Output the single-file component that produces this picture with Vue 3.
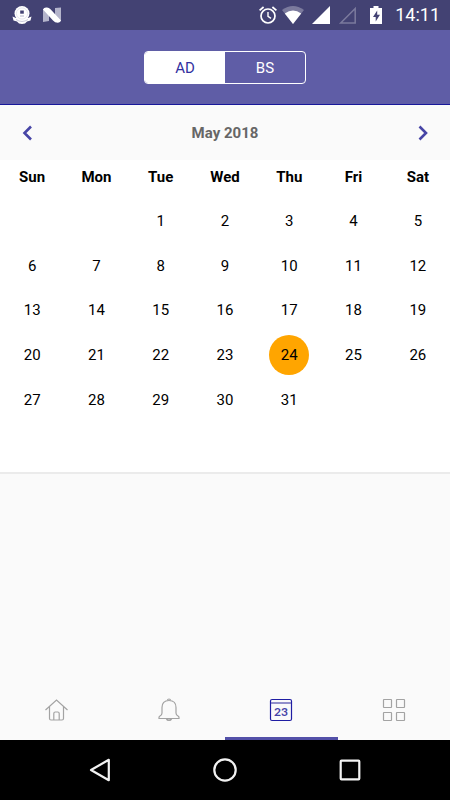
<template>
  <div class="screen">
    <div class="status-bar">
      <div class="status-group">
        <svg class="status-icon" width="20" height="20" viewBox="0 0 20 20">
          <path d="M0.500 11.500 L4 13 L16 13 L19.500 11.500 L18.500 15.500 L15 16.500 L13 18.500 L10 19 L7 18.500 L5 16.500 L1.500 15.500z" fill="#fff" />
          <circle cx="10" cy="8.500" r="7.500" fill="#fff" />
          <circle cx="10" cy="8.500" r="5.600" fill="none" stroke="#dcdce8" stroke-width="0.700" />
          <path d="M8.200 5.500h3.600v3.200H8.200z" fill="#434273" />
          <path d="M8 11h4" fill="none" stroke="#b4b4cb" stroke-width="1" />
          <path d="M4 14.500 Q10 18.500 16 14.500" fill="none" stroke="#b4b4cb" stroke-width="0.700" />
        </svg>
        <svg class="status-icon" width="20" height="20" viewBox="0 0 20 20">
          <path d="M1 4 L7 3 V16 L1 17z M13 3 L19 2.500 V16 L13 17z" fill="#b4b4cb" />
          <path d="M1 4.500 Q2 2 5 2.500 Q7 2.600 8.500 4.300 L19 15.500 Q18.500 17.500 16 17.700 Q13 17.800 11 15.500z" fill="#fff" />
        </svg>
      </div>
      <div class="status-group">
        <svg class="status-icon alarm" width="20" height="20" viewBox="0 0 20 20">
          <circle cx="10" cy="11" r="7" fill="none" stroke="#fff" stroke-width="1.700" />
          <path d="M1.600 5.400 L5.600 2 M18.400 5.400 L14.400 2" stroke="#fff" stroke-width="1.800" />
          <path d="M10 7v4.300l3 2" fill="none" stroke="#fff" stroke-width="1.400" />
        </svg>
        <svg class="status-icon" width="22" height="20" viewBox="0 0 22 20">
          <path d="M0 5 Q11 -3 22 5 L11 19z" fill="#7b7a9d" />
          <path d="M2.800 8.400 Q11 2.400 19.200 8.400 L11 19z" fill="#fff" />
        </svg>
        <svg class="status-icon" width="20" height="20" viewBox="0 0 20 20">
          <path d="M19 1v18H1z" fill="#fff" />
        </svg>
        <svg class="status-icon signal" width="20" height="20" viewBox="0 0 20 20">
          <path d="M17.200 3.500v14.500H2.700z" fill="none" stroke="#7b7a9d" stroke-width="1.500" />
        </svg>
        <svg class="status-icon battery" width="12" height="20" viewBox="0 0 12 20">
          <path d="M3.500 1h5v2H12v16H0V3h3.500z" fill="#fff" />
          <path d="M7.200 5.500 L3 12h2.700v4.500L10 9.800H7.200z" fill="#434273" />
        </svg>
        <span class="clock">14:11</span>
      </div>
    </div>

    <header class="header">
      <div class="segments">
        <button
          v-for="era in eras"
          :key="era"
          type="button"
          class="segment"
          :class="{ active: era === selectedEra }"
          :aria-pressed="era === selectedEra"
          @click="selectedEra = era"
        >
          {{ era }}
        </button>
      </div>
    </header>

    <main class="content">
      <div class="month-bar">
        <button type="button" class="arrow" aria-label="Previous month">
          <svg width="24" height="24" viewBox="0 0 24 24">
            <path d="M16 5.500 L9.500 12 L16 18.500" />
          </svg>
        </button>
        <h1 class="month">May 2018</h1>
        <button type="button" class="arrow" aria-label="Next month">
          <svg width="24" height="24" viewBox="0 0 24 24">
            <path d="M8.500 5.500 L15 12 L8.500 18.500" />
          </svg>
        </button>
      </div>

      <div class="calendar">
        <table class="days">
          <thead>
            <tr>
              <th v-for="name in weekdays" :key="name" scope="col">{{ name }}</th>
            </tr>
          </thead>
          <tbody>
            <tr v-for="(week, index) in weeks" :key="index">
              <td v-for="(day, column) in week" :key="column">
                <button
                  v-if="day"
                  type="button"
                  class="day"
                  :class="{ selected: day === selectedDay }"
                  @click="selectedDay = day"
                >
                  {{ day }}
                </button>
              </td>
            </tr>
          </tbody>
        </table>
      </div>
    </main>

    <nav class="tabs">
      <a href="#home" class="tab" aria-label="Home">
        <svg width="24" height="24" viewBox="0 0 24 24">
          <path d="M1.500 12 L12.500 2 L23.500 12 M5.500 8.500V20.500q0 1.500 1.500 1.500h11q1.500 0 1.500-1.500V8.500 M9.800 22v-6.500q0-1.500 1.500-1.500h2.400q1.500 0 1.500 1.500v6.500" />
        </svg>
      </a>
      <a href="#notices" class="tab" aria-label="Notices">
        <svg width="24" height="24" viewBox="0 0 24 24">
          <path d="M5 15V9.500Q5 2.500 12 2.500T19 9.500V15q0 2 2 3 1 .500 1 1.500v1H2v-1q0-1 1-1.500 2-1 2-3z" />
          <path d="M10.500 2.300q0-1.300 1.500-1.300t1.500 1.300M9.500 21q.500 1.500 2.500 1.500t2.500-1.500z" />
        </svg>
      </a>
      <a href="#calendar" class="tab active" aria-label="Calendar" aria-current="page">
        <svg width="24" height="24" viewBox="0 0 24 24">
          <rect x="1.500" y="1.500" width="21" height="21" rx="1.500" />
          <path class="band" d="M2 5h20" />
          <text x="12" y="18" text-anchor="middle">23</text>
        </svg>
      </a>
      <a href="#more" class="tab" aria-label="More">
        <svg width="24" height="24" viewBox="0 0 24 24">
          <rect x="1.500" y="1.500" width="8" height="8" rx="0.500" />
          <rect x="14.500" y="1.500" width="8" height="8" rx="0.500" />
          <rect x="1.500" y="14.500" width="8" height="8" rx="0.500" />
          <rect x="14.500" y="14.500" width="8" height="8" rx="0.500" />
        </svg>
      </a>
    </nav>

    <div class="system-bar">
      <button type="button" class="system-button" aria-label="Back">
        <svg width="24" height="24" viewBox="0 0 24 24">
          <path d="M20.800 1.800v20.400L3 12z" />
        </svg>
      </button>
      <button type="button" class="system-button" aria-label="Home">
        <svg width="24" height="24" viewBox="0 0 24 24">
          <circle cx="12" cy="12" r="10.700" />
        </svg>
      </button>
      <button type="button" class="system-button" aria-label="Recent apps">
        <svg width="24" height="24" viewBox="0 0 24 24">
          <rect x="2.700" y="2.700" width="18.600" height="18.600" rx="0.800" />
        </svg>
      </button>
    </div>
  </div>
</template>

<script setup>
import { ref } from 'vue'

const eras = ['AD', 'BS']
const weekdays = ['Sun', 'Mon', 'Tue', 'Wed', 'Thu', 'Fri', 'Sat']

const selectedEra = ref('AD')
const selectedDay = ref(24)

// May 2018 starts on a Tuesday
const firstWeekday = 2
const dayCount = 31

const weeks = []
for (let start = 1 - firstWeekday; start <= dayCount; start += 7) {
  const week = []
  for (let day = start; day < start + 7; day++) {
    week.push(day >= 1 && day <= dayCount ? day : null)
  }
  weeks.push(week)
}
</script>

<style>
body {
  margin: 0;
}
</style>

<style scoped>
.screen {
  min-height: 100vh;
  display: flex;
  flex-direction: column;
  background: #fafafa;
  color: #000;
  font-family: Roboto, "Liberation Sans", sans-serif;
  font-size: 15px;
}

button {
  border: none;
  padding: 0;
  background: none;
  color: inherit;
  font: inherit;
  cursor: pointer;
}

svg {
  display: block;
}

.status-bar {
  height: 30px;
  display: flex;
  align-items: center;
  justify-content: space-between;
  padding: 0 10px 0 12px;
  background: #434273;
  color: #fff;
}

.status-group {
  display: flex;
  align-items: center;
  gap: 10px;
}

.status-group:last-child {
  gap: 7px;
}

.alarm {
  margin-right: -3px;
}

.signal {
  margin-right: 5px;
}

.battery {
  margin-right: 6px;
}

.clock {
  font-size: 18px;
  line-height: 20px;
}

.header {
  height: 74px;
  display: flex;
  align-items: center;
  justify-content: center;
  background: #5f5da6;
  border-bottom: 1px solid #17179a;
}

.segments {
  box-sizing: border-box;
  width: 36%;
  height: 33px;
  display: flex;
  overflow: hidden;
  border: 1px solid #fff;
  border-radius: 4px;
}

.segment {
  flex: 1;
  padding-top: 2px;
  color: #fff;
}

.segment.active {
  background: #fff;
  color: #3130a0;
}

.content {
  flex: 1;
}

.month-bar {
  height: 55px;
  display: flex;
  align-items: center;
  justify-content: space-between;
  padding: 0 15px;
}

.arrow path {
  fill: none;
  stroke: #4745a6;
  stroke-width: 2.6;
}

.month {
  margin: 0;
  color: #666;
  font-size: 15px;
  font-weight: 700;
}

.calendar {
  padding-bottom: 50px;
  background: #fff;
  border-bottom: 2px solid #ebebeb;
}

.days {
  width: 100%;
  height: 262px;
  table-layout: fixed;
  border-collapse: collapse;
}

.days th {
  height: 39px;
  padding: 0 0 5px;
  box-sizing: border-box;
  font-weight: 700;
}

.days td {
  padding: 0;
  text-align: center;
}

.day {
  display: block;
  width: 40px;
  height: 40px;
  margin: 0 auto;
  border-radius: 50%;
}

.day.selected {
  background: #ffa500;
}

.tabs {
  height: 60px;
  display: flex;
}

.tab {
  flex: 1;
  display: flex;
  align-items: center;
  justify-content: center;
  box-sizing: border-box;
  padding-top: 3px;
  border-bottom: 3px solid transparent;
}

.tab.active {
  border-bottom-color: #5350a8;
}

.tab path,
.tab rect {
  fill: none;
  stroke: #a3a3a3;
  stroke-width: 1.2;
}

.tab.active rect {
  stroke: #1f1da3;
}

.tab.active .band {
  stroke: #8583c4;
  stroke-width: 1.8;
}

.tab text {
  fill: #4543a8;
  font-family: Lato, sans-serif;
  font-size: 12px;
  font-weight: 700;
}

.system-bar {
  height: 60px;
  display: flex;
  align-items: center;
  justify-content: center;
  gap: 101px;
  background: #000;
}

.system-button path,
.system-button circle,
.system-button rect {
  fill: none;
  stroke: #f2f2f2;
  stroke-width: 2.2;
  stroke-linejoin: round;
}
</style>
